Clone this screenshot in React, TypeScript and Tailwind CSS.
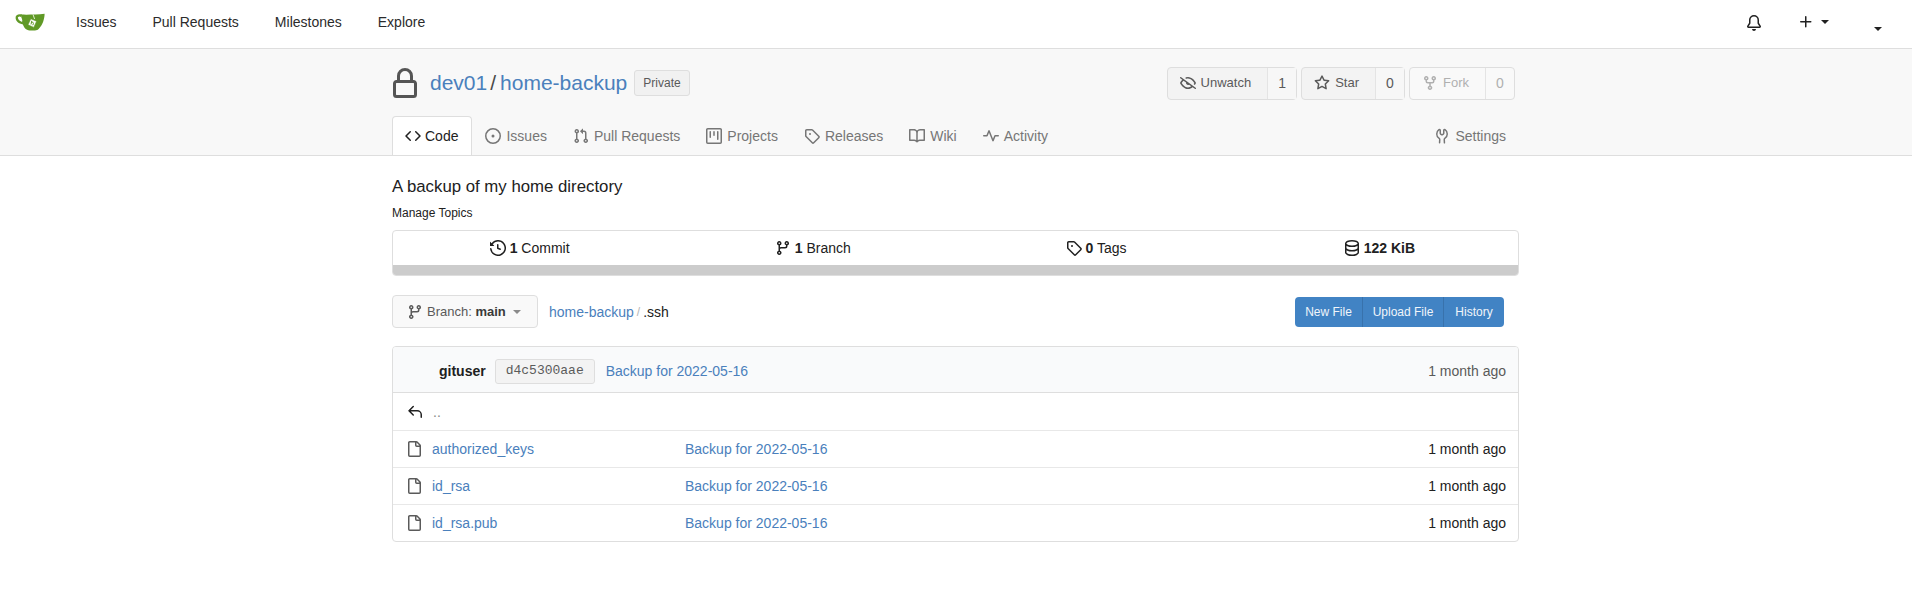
import type { ReactNode } from "react";

const icons: Record<string, string> = {
  code: "m11.28 3.22 4.25 4.25a.75.75 0 0 1 0 1.06l-4.25 4.25a.749.749 0 0 1-1.275-.326.749.749 0 0 1 .215-.734L13.94 8l-3.72-3.72a.749.749 0 0 1 .326-1.275.749.749 0 0 1 .734.215Zm-6.56 0a.751.751 0 0 1 1.042.018.751.751 0 0 1 .018 1.042L2.06 8l3.72 3.72a.749.749 0 0 1-.326 1.275.749.749 0 0 1-.734-.215L.47 8.53a.75.75 0 0 1 0-1.06Z",
  issue: "M8 9.5a1.5 1.5 0 1 0 0-3 1.5 1.5 0 0 0 0 3ZM8 0a8 8 0 1 1 0 16A8 8 0 0 1 8 0ZM1.5 8a6.5 6.5 0 1 0 13 0 6.5 6.5 0 0 0-13 0Z",
  pull: "M1.5 3.25a2.25 2.25 0 1 1 3 2.122v5.256a2.251 2.251 0 1 1-1.5 0V5.372A2.25 2.25 0 0 1 1.5 3.25Zm5.677-.177L9.573.677A.25.25 0 0 1 10 .854V2.5h1A2.5 2.5 0 0 1 13.5 5v5.628a2.251 2.251 0 1 1-1.5 0V5a1 1 0 0 0-1-1h-1v1.646a.25.25 0 0 1-.427.177L7.177 3.427a.25.25 0 0 1 0-.354ZM3.75 2.5a.75.75 0 1 0 0 1.5.75.75 0 0 0 0-1.5Zm0 9.5a.75.75 0 1 0 0 1.5.75.75 0 0 0 0-1.5Zm8.25.75a.75.75 0 1 0 1.5 0 .75.75 0 0 0-1.5 0Z",
  project: "M1.75 0h12.5C15.216 0 16 .784 16 1.75v12.5A1.75 1.75 0 0 1 14.25 16H1.75A1.75 1.75 0 0 1 0 14.25V1.75C0 .784.784 0 1.75 0ZM1.5 1.75v12.5c0 .138.112.25.25.25h12.5a.25.25 0 0 0 .25-.25V1.75a.25.25 0 0 0-.25-.25H1.75a.25.25 0 0 0-.25.25ZM11.75 3a.75.75 0 0 1 .75.75v7.5a.75.75 0 0 1-1.5 0v-7.5a.75.75 0 0 1 .75-.75Zm-8.25.75a.75.75 0 0 1 1.5 0v5.5a.75.75 0 0 1-1.5 0ZM8 3a.75.75 0 0 1 .75.75v3.5a.75.75 0 0 1-1.5 0v-3.5A.75.75 0 0 1 8 3Z",
  tag: "M1 7.775V2.75C1 1.784 1.784 1 2.75 1h5.025c.464 0 .91.184 1.238.513l6.25 6.25a1.75 1.75 0 0 1 0 2.474l-5.026 5.026a1.75 1.75 0 0 1-2.474 0l-6.25-6.25A1.752 1.752 0 0 1 1 7.775Zm1.5 0c0 .066.026.13.073.177l6.25 6.25a.25.25 0 0 0 .354 0l5.025-5.025a.25.25 0 0 0 0-.354l-6.25-6.25a.25.25 0 0 0-.177-.073H2.75a.25.25 0 0 0-.25.25ZM6 5a1 1 0 1 1 0 2 1 1 0 0 1 0-2Z",
  book: "M0 1.75A.75.75 0 0 1 .75 1h4.253c1.227 0 2.317.59 3 1.501A3.743 3.743 0 0 1 11.006 1h4.245a.75.75 0 0 1 .75.75v10.5a.75.75 0 0 1-.75.75h-4.507a2.25 2.25 0 0 0-1.591.659l-.622.621a.75.75 0 0 1-1.06 0l-.622-.621A2.25 2.25 0 0 0 5.258 13H.75a.75.75 0 0 1-.75-.75Zm7.251 10.324.004-5.073-.002-2.253A2.25 2.25 0 0 0 5.003 2.5H1.5v9h3.757a3.75 3.75 0 0 1 1.994.574ZM8.755 4.75l-.004 7.322a3.752 3.752 0 0 1 1.992-.572H14.5v-9h-3.495a2.25 2.25 0 0 0-2.25 2.25Z",
  pulse: "M6 2c.306 0 .582.187.696.471L10 10.731l1.304-3.26A.751.751 0 0 1 12 7h3.25a.75.75 0 0 1 0 1.5h-2.742l-1.812 4.528a.751.751 0 0 1-1.392 0L6 4.77 4.696 8.03A.75.75 0 0 1 4 8.5H.75a.75.75 0 0 1 0-1.5h2.742l1.812-4.529A.751.751 0 0 1 6 2Z",
  tools: "M5.433 2.304A4.492 4.492 0 0 0 3.5 6c0 1.598.832 3.002 2.09 3.802.518.328.929.923.902 1.64v.008l-.164 3.337a.75.75 0 1 1-1.498-.073l.163-3.33c.002-.085-.05-.216-.207-.316A5.996 5.996 0 0 1 2 6a5.993 5.993 0 0 1 2.567-4.92 1.482 1.482 0 0 1 1.673-.04c.462.296.76.827.76 1.423v2.82c0 .082.041.16.11.206l.75.51a.25.25 0 0 0 .28 0l.75-.51A.249.249 0 0 0 9 5.282V2.463c0-.596.298-1.127.76-1.423a1.482 1.482 0 0 1 1.673.04A5.993 5.993 0 0 1 14 6a5.996 5.996 0 0 1-2.786 5.068c-.157.1-.209.23-.207.315l.163 3.33a.752.752 0 0 1-1.094.714.75.75 0 0 1-.404-.64l-.164-3.345c-.027-.717.384-1.312.902-1.64A4.495 4.495 0 0 0 12.5 6a4.492 4.492 0 0 0-1.933-3.696c-.024.017-.067.067-.067.16v2.818a1.75 1.75 0 0 1-.767 1.448l-.75.51a1.75 1.75 0 0 1-1.966 0l-.75-.51A1.75 1.75 0 0 1 5.5 5.282V2.463c0-.092-.043-.142-.067-.159Z",
  eyeClosed: "M.143 2.31a.75.75 0 0 1 1.047-.167l14.5 10.5a.75.75 0 1 1-.88 1.214l-2.248-1.628C11.346 13.19 9.792 14 8 14c-1.981 0-3.67-.992-4.933-2.078C1.797 10.832.88 9.577.43 8.9a1.619 1.619 0 0 1 0-1.797c.353-.533.995-1.42 1.868-2.305L.31 3.357A.75.75 0 0 1 .143 2.31Zm1.536 5.622A.12.12 0 0 0 1.657 8c0 .021.006.045.022.068.412.621 1.242 1.75 2.366 2.717C5.175 11.758 6.527 12.5 8 12.5c1.195 0 2.31-.488 3.29-1.191L9.063 9.695A2 2 0 0 1 6.058 7.52L3.529 5.688a14.207 14.207 0 0 0-1.85 2.244ZM8 3.5c-.516 0-1.017.09-1.499.251a.75.75 0 1 1-.473-1.423A6.207 6.207 0 0 1 8 2c1.981 0 3.67.992 4.933 2.078 1.27 1.091 2.187 2.345 2.637 3.023a1.62 1.62 0 0 1 0 1.798c-.11.166-.248.365-.41.587a.75.75 0 1 1-1.21-.887c.148-.201.272-.382.371-.53a.119.119 0 0 0 0-.137c-.412-.621-1.242-1.75-2.366-2.717C10.825 4.242 9.473 3.5 8 3.5Z",
  star: "M8 .25a.75.75 0 0 1 .673.418l1.882 3.815 4.21.612a.75.75 0 0 1 .416 1.279l-3.046 2.97.719 4.192a.751.751 0 0 1-1.088.791L8 12.347l-3.766 1.98a.75.75 0 0 1-1.088-.79l.72-4.194L.818 6.374a.75.75 0 0 1 .416-1.28l4.21-.611L7.327.668A.75.75 0 0 1 8 .25Zm0 2.445L6.615 5.5a.75.75 0 0 1-.564.41l-3.097.45 2.24 2.184a.75.75 0 0 1 .216.664l-.528 3.084 2.769-1.456a.75.75 0 0 1 .698 0l2.77 1.456-.53-3.084a.75.75 0 0 1 .216-.664l2.24-2.183-3.096-.45a.75.75 0 0 1-.564-.41L8 2.694Z",
  fork: "M5 5.372v.878c0 .414.336.75.75.75h4.5a.75.75 0 0 0 .75-.75v-.878a2.25 2.25 0 1 1 1.5 0v.878a2.25 2.25 0 0 1-2.25 2.25h-1.5v2.128a2.251 2.251 0 1 1-1.5 0V8.5h-1.5A2.25 2.25 0 0 1 3.5 6.25v-.878a2.25 2.25 0 1 1 1.5 0ZM5 3.25a.75.75 0 1 0-1.5 0 .75.75 0 0 0 1.5 0Zm6.75.75a.75.75 0 1 0 0-1.5.75.75 0 0 0 0 1.5Zm-3 8.75a.75.75 0 1 0-1.5 0 .75.75 0 0 0 1.5 0Z",
  history: "m.427 1.927 1.215 1.215a8.002 8.002 0 1 1-1.6 5.685.75.75 0 1 1 1.493-.154 6.5 6.5 0 1 0 1.18-4.458l1.358 1.358A.25.25 0 0 1 3.896 6H.25A.25.25 0 0 1 0 5.75V2.104a.25.25 0 0 1 .427-.177ZM7.75 4a.75.75 0 0 1 .75.75v2.992l2.028.812a.75.75 0 0 1-.557 1.392l-2.5-1A.751.751 0 0 1 7 8.25v-3.5A.75.75 0 0 1 7.75 4Z",
  branch: "M9.5 3.25a2.25 2.25 0 1 1 3 2.122V6A2.5 2.5 0 0 1 10 8.5H6a1 1 0 0 0-1 1v1.128a2.251 2.251 0 1 1-1.5 0V5.372a2.25 2.25 0 1 1 1.5 0v1.836A2.493 2.493 0 0 1 6 7h4a1 1 0 0 0 1-1v-.628A2.25 2.25 0 0 1 9.5 3.25Zm-6 0a.75.75 0 1 0 1.5 0 .75.75 0 0 0-1.5 0Zm8.25-.75a.75.75 0 1 0 0 1.5.75.75 0 0 0 0-1.5ZM4.25 12a.75.75 0 1 0 0 1.5.75.75 0 0 0 0-1.5Z",
  database: "M1 3.5c0-.626.292-1.165.7-1.59.406-.422.956-.767 1.579-1.041C4.525.32 6.195 0 8 0c1.805 0 3.475.32 4.722.869.622.274 1.172.62 1.578 1.04.408.426.7.965.7 1.591v9c0 .626-.292 1.165-.7 1.59-.406.422-.956.767-1.579 1.041C11.476 15.68 9.806 16 8 16c-1.805 0-3.475-.32-4.721-.869-.623-.274-1.173-.619-1.579-1.041-.408-.425-.7-.964-.7-1.59Zm1.5 0c0 .133.058.318.282.551.227.237.591.483 1.101.707C4.898 5.205 6.353 5.5 8 5.5c1.646 0 3.101-.295 4.118-.742.508-.224.873-.471 1.1-.708.224-.232.282-.417.282-.55 0-.133-.058-.318-.282-.551-.227-.237-.591-.483-1.101-.707C11.102 1.795 9.647 1.5 8 1.5c-1.646 0-3.101.295-4.118.742-.508.224-.873.471-1.1.708-.224.232-.282.417-.282.55Zm0 4.5c0 .133.058.318.282.551.227.237.591.483 1.101.707C4.898 9.705 6.353 10 8 10c1.646 0 3.101-.295 4.118-.742.508-.224.873-.471 1.1-.708.224-.232.282-.417.282-.55V5.724c-.241.15-.503.286-.778.407C11.475 6.68 9.805 7 8 7c-1.805 0-3.475-.32-4.721-.869a6.15 6.15 0 0 1-.779-.407Zm0 2.225V12.5c0 .133.058.318.282.55.227.237.592.484 1.1.708 1.016.447 2.471.742 4.118.742 1.647 0 3.102-.295 4.117-.742.51-.224.874-.47 1.101-.707.224-.233.282-.418.282-.551v-2.275c-.241.15-.503.285-.778.406-1.247.549-2.917.869-4.722.869-1.805 0-3.475-.32-4.721-.869a6.327 6.327 0 0 1-.779-.406Z",
  reply: "M6.78 1.97a.75.75 0 0 1 0 1.06L3.81 6h6.44A4.75 4.75 0 0 1 15 10.75v2.5a.75.75 0 0 1-1.5 0v-2.5a3.25 3.25 0 0 0-3.25-3.25H3.81l2.97 2.97a.749.749 0 0 1-.326 1.275.749.749 0 0 1-.734-.215L1.47 7.28a.75.75 0 0 1 0-1.06l4.25-4.25a.75.75 0 0 1 1.06 0Z",
  file: "M2 1.75C2 .784 2.784 0 3.75 0h6.586c.464 0 .909.184 1.237.513l2.914 2.914c.329.328.513.773.513 1.237v9.586A1.75 1.75 0 0 1 13.25 16h-9.5A1.75 1.75 0 0 1 2 14.25Zm1.75-.25a.25.25 0 0 0-.25.25v12.5c0 .138.112.25.25.25h9.5a.25.25 0 0 0 .25-.25V6h-2.75A1.75 1.75 0 0 1 9 4.25V1.5Zm6.75.062V4.25c0 .138.112.25.25.25h2.688l-.011-.013-2.914-2.914-.013-.011Z",
  bell: "M8 16a2 2 0 0 0 1.985-1.75c.017-.137-.097-.25-.235-.25h-3.5c-.138 0-.252.113-.235.25A2 2 0 0 0 8 16ZM3 5a5 5 0 0 1 10 0v2.947c0 .05.015.098.042.139l1.703 2.555A1.519 1.519 0 0 1 13.482 13H2.518a1.516 1.516 0 0 1-1.263-2.36l1.703-2.554A.255.255 0 0 0 3 7.947Zm5-3.5A3.5 3.5 0 0 0 4.5 5v2.947c0 .346-.102.683-.294.97l-1.703 2.556a.017.017 0 0 0-.003.01l.001.006c0 .002.002.004.004.006l.006.004.007.001h10.964l.007-.001.006-.004.004-.006.001-.007a.017.017 0 0 0-.003-.01l-1.703-2.554a1.745 1.745 0 0 1-.294-.97V5A3.5 3.5 0 0 0 8 1.5Z",
  plus: "M7.75 2a.75.75 0 0 1 .75.75V7h4.25a.75.75 0 0 1 0 1.5H8.5v4.25a.75.75 0 0 1-1.5 0V8.5H2.75a.75.75 0 0 1 0-1.5H7V2.75A.75.75 0 0 1 7.75 2Z",
  lock: "M4 4a4 4 0 0 1 8 0v2h.25c.966 0 1.75.784 1.75 1.75v5.5A1.75 1.75 0 0 1 12.25 15h-8.5A1.75 1.75 0 0 1 2 13.25v-5.5C2 6.784 2.784 6 3.75 6H4Zm8.25 3.5h-8.5a.25.25 0 0 0-.25.25v5.5c0 .138.112.25.25.25h8.5a.25.25 0 0 0 .25-.25v-5.5a.25.25 0 0 0-.25-.25ZM10.5 6V4a2.5 2.5 0 1 0-5 0v2Z",
};

function Icon({ name, size = 16, className = "" }: { name: string; size?: number; className?: string }) {
  return (
    <svg viewBox="0 0 16 16" width={size} height={size} fill="currentColor" className={`shrink-0 ${className}`}>
      <path fillRule="evenodd" d={icons[name]} />
    </svg>
  );
}

function Caret({ className = "border-t-[#212121]" }: { className?: string }) {
  return <span className={`h-0 w-0 border-x-[4px] border-t-[4px] border-x-transparent ${className}`} />;
}

function Logo() {
  return (
    <svg viewBox="0 0 30 18" width={30} height={18} className="shrink-0">
      <path d="M7 1.5 C3 .8 .5 2 .6 5 C.8 8.6 4.2 11 9 11.4 L8 9.2 C5.4 8.6 3 6.8 2.9 4.8 C2.9 3.8 4 3.6 6.2 4 Z" fill="#609926" />
      <path d="M6 1.6 C13 1.8 22 1.6 29.6 .8 C29.6 5 28 12 23.6 16 C22.6 17 21.6 17.4 20 17.4 L14.6 17.4 C11 17.4 8.8 14.6 7.6 10.6 C6.8 7.6 6.2 4.6 6 1.6 Z" fill="#609926" />
      <path d="M4 3.6 C5.6 3.8 7.2 5.6 7.4 8 C5.4 7.4 3.8 5.8 4 3.6 Z" fill="#ffffff" />
      <path d="M18 1.5 L19.6 6" stroke="#ffffff" strokeWidth="0.8" />
      <path d="M15.8 5.8 L21.6 8.2 L18.8 14.4 L13 11.8 Z" fill="#ffffff" stroke="#609926" strokeWidth="0.6" />
      <path d="M16.8 7.8 L16 11.4 M16.4 9.6 C17.4 8.8 18.8 9.4 18.4 10.6 L17.8 12.2" stroke="#609926" strokeWidth="1" fill="none" />
    </svg>
  );
}

function RepoButton({ icon, label, count, disabled = false }: { icon: string; label: string; count: string; disabled?: boolean }) {
  const tone = disabled ? "text-[#b0b0b0] bg-[#f9f9f9]" : "text-[#5a5a5a] bg-[#f3f3f3]";
  return (
    <div className={`flex h-[33px] rounded-[4px] border border-[#dedede] text-[13px] ${tone}`}>
      <div className="flex items-center gap-[5px] border-r border-[#e4e4e4] pl-[12px] pr-[16px]">
        <Icon name={icon} />
        {label}
      </div>
      <div className={`flex w-[28px] items-center justify-center ${disabled ? "" : "bg-[#f7f7f7]"} text-sm`}>{count}</div>
    </div>
  );
}

function Tab({ icon, label, active = false }: { icon: string; label: string; active?: boolean }) {
  if (active) {
    return (
      <div className="-mb-px flex h-[39px] items-center gap-[4px] rounded-t-[4px] border border-b-0 border-[#dedede] bg-white pl-[12px] pr-[13px] text-[#212121]">
        <Icon name={icon} />
        {label}
      </div>
    );
  }
  return (
    <div className="flex h-[39px] items-center gap-[5px] px-[13px] text-[#767676]">
      <Icon name={icon} />
      {label}
    </div>
  );
}

function Stat({ icon, children }: { icon: string; children: ReactNode }) {
  return (
    <div className="flex h-[34px] flex-1 items-center justify-center gap-[4px] text-[#212121]">
      <Icon name={icon} />
      <span>{children}</span>
    </div>
  );
}

const files = ["authorized_keys", "id_rsa", "id_rsa.pub"];

export default function App() {
  return (
    <div className="min-h-[601px] bg-white font-['Liberation_Sans',Arial,sans-serif] text-sm text-[#212121]">
      <nav className="flex h-[49px] items-center border-b border-[#dedede] pb-[4px]">
        <div className="ml-[15px] mr-[31px]">
          <Logo />
        </div>
        <a className="text-[#2b2b2b]">Issues</a>
        <a className="ml-[36px] text-[#2b2b2b]">Pull Requests</a>
        <a className="ml-[36px] text-[#2b2b2b]">Milestones</a>
        <a className="ml-[36px] text-[#2b2b2b]">Explore</a>
        <div className="ml-auto flex items-center">
          <Icon name="bell" className="mt-[2px]" />
          <Icon name="plus" className="ml-[36px]" />
          <Caret className="ml-[7px] border-t-[#212121]" />
          <Caret className="ml-[45px] mr-[30px] mt-[14px] border-t-[#212121]" />
        </div>
      </nav>

      <header className="border-b border-[#dedede] bg-[#f8f8f8]">
        <div className="ml-[392px] w-[1127px]">
          <div className="flex items-center pt-[17px]">
            <Icon name="lock" size={32} className="-ml-[3px] mt-[2px] text-[#555555]" />
            <div className="ml-[9px] flex items-center text-[21px]">
              <a className="text-[#4a80bc]">dev01</a>
              <span className="ml-[3px] mr-[4px] text-[#4a4a4a]">/</span>
              <a className="text-[#4a80bc]">home-backup</a>
            </div>
            <span className="ml-[7px] rounded-[3px] border border-[#dedede] bg-[#f1f1f1] px-[8px] py-[4px] text-xs text-[#5a5a5a]">
              Private
            </span>
            <div className="ml-auto mr-[4px] flex gap-[4px]">
              <RepoButton icon="eyeClosed" label="Unwatch" count="1" />
              <RepoButton icon="star" label="Star" count="0" />
              <RepoButton icon="fork" label="Fork" count="0" disabled />
            </div>
          </div>
          <div className="mt-[16px] flex">
            <Tab icon="code" label="Code" active />
            <Tab icon="issue" label="Issues" />
            <Tab icon="pull" label="Pull Requests" />
            <Tab icon="project" label="Projects" />
            <Tab icon="tag" label="Releases" />
            <Tab icon="book" label="Wiki" />
            <Tab icon="pulse" label="Activity" />
            <div className="ml-auto">
              <Tab icon="tools" label="Settings" />
            </div>
          </div>
        </div>
      </header>

      <main className="ml-[392px] w-[1127px]">
        <p className="mt-[21px] text-[16.8px] leading-[20px]">A backup of my home directory</p>
        <p className="mt-[7px] text-xs leading-[18px]">Manage Topics</p>

        <section className="mt-[8px] overflow-hidden rounded-[4px] border border-[#dedede]">
          <div className="-ml-[5px] -mr-[3px] flex">
            <Stat icon="history">
              <b>1</b> Commit
            </Stat>
            <Stat icon="branch">
              <b>1</b> Branch
            </Stat>
            <Stat icon="tag">
              <b>0</b> Tags
            </Stat>
            <Stat icon="database">
              <b>122 KiB</b>
            </Stat>
          </div>
          <div className="h-[10px] bg-[#cccccc]" />
        </section>

        <div className="mt-[19px] flex items-center">
          <div className="flex h-[33px] w-[146px] items-center rounded-[4px] border border-[#dedede] bg-[#f9f9f9] pl-[14px] text-xs text-[#5a5a5a]">
            <Icon name="branch" className="mr-[4px]" />
            <span className="text-[13px]">
              Branch: <b className="text-[#3a3a3a]">main</b>
            </span>
            <Caret className="ml-[7px] border-t-[#8a8a8a]" />
          </div>
          <a className="ml-[11px] text-[#4a80bc]">home-backup</a>
          <span className="mx-[3px] text-xs text-[#b5b5b5]">/</span>
          <span>.ssh</span>
          <div className="ml-auto mr-[15px] flex h-[30px] items-center rounded-[4px] bg-[#4183c4] text-xs text-[#f0f5fa]">
            <span className="flex h-full w-[68px] items-center justify-center border-r border-[#3872ac]">New File</span>
            <span className="flex h-full w-[81px] items-center justify-center border-r border-[#3872ac]">Upload File</span>
            <span className="flex h-full w-[60px] items-center justify-center">History</span>
          </div>
        </div>

        <section className="mt-[18px] overflow-hidden rounded-[4px] border border-[#dedede]">
          <div className="flex h-[46px] items-center border-b border-[#dedede] bg-[#f9fafb] pr-[12px] pt-[2px]">
            <b className="ml-[46px]">gituser</b>
            <span className="ml-[9px] mt-[1px] flex h-[25px] w-[100px] items-center justify-center rounded-[3px] border border-[#dedede] bg-[#f3f3f3] pt-[1px] font-['Liberation_Mono',monospace] text-[13px] text-[#5a5a5a]">
              d4c5300aae
            </span>
            <a className="ml-[11px] mt-[1px] text-[#4a80bc]">Backup for 2022-05-16</a>
            <span className="ml-auto mt-[1px] text-[#5a5a5a]">1 month ago</span>
          </div>
          <div className="flex h-[37px] items-center pl-[14px]">
            <Icon name="reply" />
            <span className="ml-[10px] text-[#8a8a8a]">..</span>
          </div>
          {files.map((name) => (
            <div key={name} className="flex h-[37px] items-center border-t border-[#e8e8e8] pl-[13px] pr-[12px]">
              <Icon name="file" className="text-[#5a5a5a]" />
              <a className="ml-[10px] w-[253px] text-[#4a80bc]">{name}</a>
              <a className="text-[#4a80bc]">Backup for 2022-05-16</a>
              <span className="ml-auto">1 month ago</span>
            </div>
          ))}
        </section>
      </main>
    </div>
  );
}
